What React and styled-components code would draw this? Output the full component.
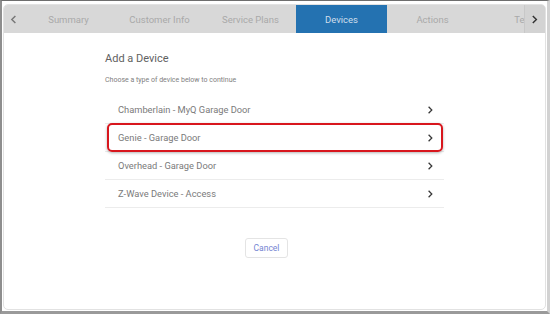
import React from 'react';
import styled, { createGlobalStyle } from 'styled-components';

const GlobalStyle = createGlobalStyle`
  html, body {
    margin: 0;
    padding: 0;
    background: #ffffff;
  }
  * {
    box-sizing: border-box;
  }
`;

const Frame = styled.div`
  width: 550px;
  height: 314px;
  border-top: 1px solid #6e6e6e;
  border-left: 2px solid #8e8e8e;
  border-right: 3px solid #d2d2d2;
  border-bottom: 3px solid #9a9a9a;
  padding: 3px 1px 1px 1px;
  background: #ffffff;
  font-family: Roboto, "Liberation Sans", Arial, sans-serif;
`;

const Panel = styled.div`
  height: 100%;
  border: 1px solid #e2e2e2;
  border-radius: 5px;
  overflow: hidden;
  display: flex;
  flex-direction: column;
`;

const TabBar = styled.div`
  display: flex;
  height: 28px;
  background: #d8d8d8;
  flex-shrink: 0;
`;

const ArrowButton = styled.div`
  width: ${(p) => p.$width}px;
  flex-shrink: 0;
  display: flex;
  align-items: center;
  justify-content: center;
  background: ${(p) => (p.$edge ? '#d3d3d3' : 'transparent')};
  border-left: ${(p) => (p.$edge ? '1px solid #c8c8c8' : 'none')};
`;

const TabStrip = styled.div`
  flex: 1;
  display: flex;
  overflow: hidden;
`;

const Tab = styled.div`
  width: 91px;
  flex-shrink: 0;
  display: flex;
  align-items: center;
  justify-content: center;
  font-size: 9.5px;
  white-space: nowrap;
  color: ${(p) => (p.$active ? '#cfdeec' : '#a9a9a9')};
  background: ${(p) => (p.$active ? '#2472b1' : 'transparent')};
`;

const Content = styled.div`
  width: 339px;
  margin: 0 auto;
  padding-top: 19px;
`;

const Heading = styled.h2`
  margin: 0;
  font-size: 11px;
  line-height: 14px;
  font-weight: 400;
  color: #616161;
`;

const Subtitle = styled.p`
  margin: 9px 0 0 0;
  font-size: 7px;
  line-height: 10px;
  color: #808080;
`;

const List = styled.div`
  margin-top: 11px;
  display: flex;
  flex-direction: column;
`;

const Row = styled.div`
  position: relative;
  height: 28px;
  display: flex;
  align-items: center;
  justify-content: space-between;
  padding: 0 11px 0 13px;
  border-bottom: 1px solid #ececec;
  font-size: 9.3px;
  color: #7a7a7a;
`;

const Highlight = styled.div`
  position: absolute;
  top: -1px;
  bottom: -1px;
  left: 2px;
  right: 1px;
  border: 2px solid #d8161d;
  border-radius: 5px;
  box-shadow: 0 1px 3px rgba(0, 0, 0, 0.3);
  pointer-events: none;
`;

const Actions = styled.div`
  margin-top: 28px;
  padding-left: 140px;
`;

const CancelButton = styled.button`
  height: 20px;
  width: 43px;
  padding: 0;
  border: 1px solid #e4e4e4;
  border-radius: 3px;
  background: #ffffff;
  font-family: Roboto, "Liberation Sans", Arial, sans-serif;
  font-size: 8.5px;
  color: #7585d2;
`;

function Chevron({ dir = 'right', color = '#3a3a3a', size = 8 }) {
  const d = dir === 'right' ? 'M2 1 L6 5 L2 9' : 'M6 1 L2 5 L6 9';
  return (
    <svg width={size * 0.8} height={size} viewBox="0 0 8 10">
      <path d={d} fill="none" stroke={color} strokeWidth="1.6" />
    </svg>
  );
}

const tabs = ['Summary', 'Customer Info', 'Service Plans', 'Devices', 'Actions', 'Test'];

const devices = [
  'Chamberlain - MyQ Garage Door',
  'Genie - Garage Door',
  'Overhead - Garage Door',
  'Z-Wave Device - Access',
];

export default function App() {
  return (
    <>
      <GlobalStyle />
      <Frame>
        <Panel>
          <TabBar>
            <ArrowButton $width={19}>
              <Chevron dir="left" color="#777" size={9} />
            </ArrowButton>
            <TabStrip>
              {tabs.map((t) => (
                <Tab key={t} $active={t === 'Devices'}>
                  {t}
                </Tab>
              ))}
            </TabStrip>
            <ArrowButton $width={21} $edge>
              <Chevron color="#333" size={9} />
            </ArrowButton>
          </TabBar>
          <Content>
            <Heading>Add a Device</Heading>
            <Subtitle>Choose a type of device below to continue</Subtitle>
            <List>
              {devices.map((d) => (
                <Row key={d}>
                  <span>{d}</span>
                  <Chevron />
                  {d.startsWith('Genie') && <Highlight />}
                </Row>
              ))}
            </List>
            <Actions>
              <CancelButton>Cancel</CancelButton>
            </Actions>
          </Content>
        </Panel>
      </Frame>
    </>
  );
}
